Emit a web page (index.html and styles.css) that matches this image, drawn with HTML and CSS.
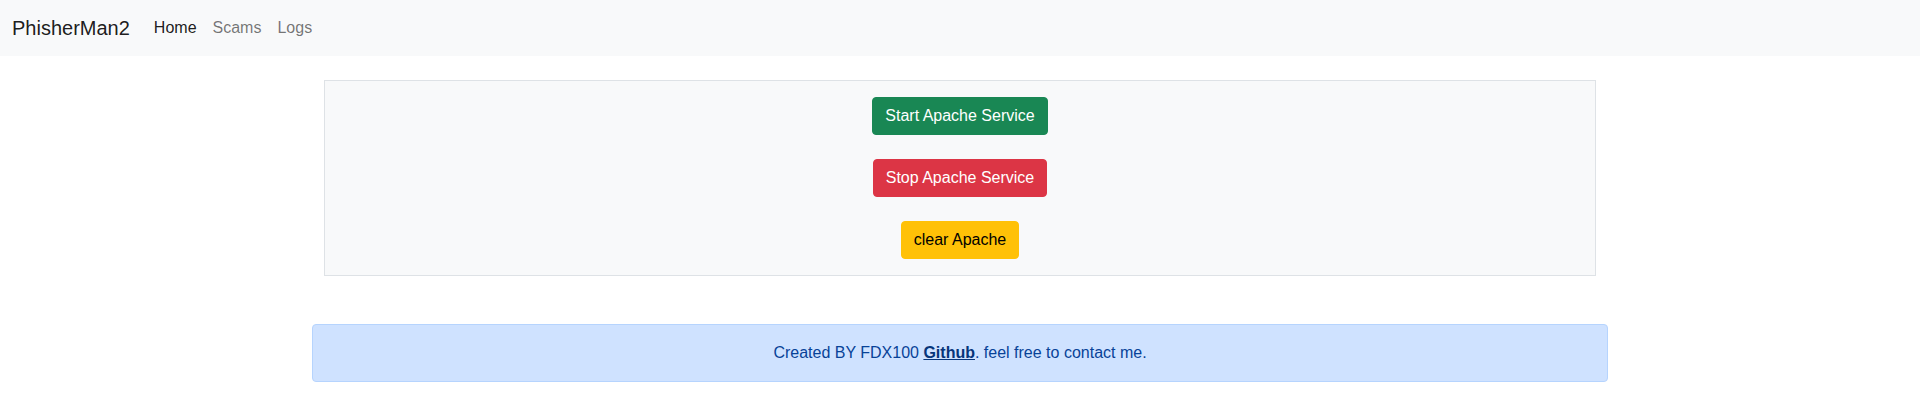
FILE: index.html
```html
<!DOCTYPE html>
<html lang="en">
<head>
  <meta charset="UTF-8">
  <meta name="viewport" content="width=device-width, initial-scale=1.0">
  <title>PhisherMan2</title>
  <link rel="stylesheet" href="styles.css">
</head>
<body>

  <nav class="navbar">
    <a class="brand" href="#">PhisherMan2</a>
    <div class="nav-links">
      <a class="nav-link active" href="#">Home</a>
      <a class="nav-link" href="#">Scams</a>
      <a class="nav-link" href="#">Logs</a>
    </div>
  </nav>

  <div class="container">
    <div class="panel">
      <button class="btn btn-success">Start Apache Service</button>
      <button class="btn btn-danger">Stop Apache Service</button>
      <button class="btn btn-warning">clear Apache</button>
    </div>

    <div class="alert">
      Created BY FDX100 <a class="alert-link" href="#">Github</a>. feel free to contact me.
    </div>
  </div>

</body>
</html>
```

FILE: styles.css
```css
* {
  margin: 0;
  padding: 0;
  box-sizing: border-box;
}

body {
  font-family: "Liberation Sans", Arial, sans-serif;
  font-size: 16px;
  line-height: 1.5;
  color: #212529;
  background-color: #fff;
}

.navbar {
  display: flex;
  align-items: center;
  background-color: #f8f9fa;
  padding: 8px 12px;
  height: 56px;
}

.brand {
  font-size: 20px;
  line-height: 30px;
  padding: 5px 0;
  margin-right: 16px;
  color: rgba(0, 0, 0, 0.9);
  text-decoration: none;
}

.nav-links {
  display: flex;
}

.nav-link {
  padding: 8px;
  color: rgba(0, 0, 0, 0.55);
  text-decoration: none;
}

.nav-link.active {
  color: rgba(0, 0, 0, 0.9);
}

.container {
  max-width: 1320px;
  margin: 24px auto 0;
  padding: 0 12px;
}

.panel {
  margin: 0 12px;
  background-color: #f8f9fa;
  border: 1px solid #dee2e6;
  padding: 16px;
  display: flex;
  flex-direction: column;
  align-items: center;
  gap: 24px;
}

.btn {
  font-family: inherit;
  font-size: 16px;
  line-height: 24px;
  padding: 6px 12px;
  border: 1px solid transparent;
  border-radius: 4px;
  cursor: pointer;
}

.btn-success {
  background-color: #198754;
  border-color: #198754;
  color: #fff;
}

.btn-danger {
  background-color: #dc3545;
  border-color: #dc3545;
  color: #fff;
}

.btn-warning {
  background-color: #ffc107;
  border-color: #ffc107;
  color: #000;
}

.alert {
  margin-top: 48px;
  padding: 16px;
  border: 1px solid #b6d4fe;
  border-radius: 4px;
  background-color: #cfe2ff;
  color: #084298;
  text-align: center;
}

.alert-link {
  font-weight: 700;
  color: #06357a;
}
```
